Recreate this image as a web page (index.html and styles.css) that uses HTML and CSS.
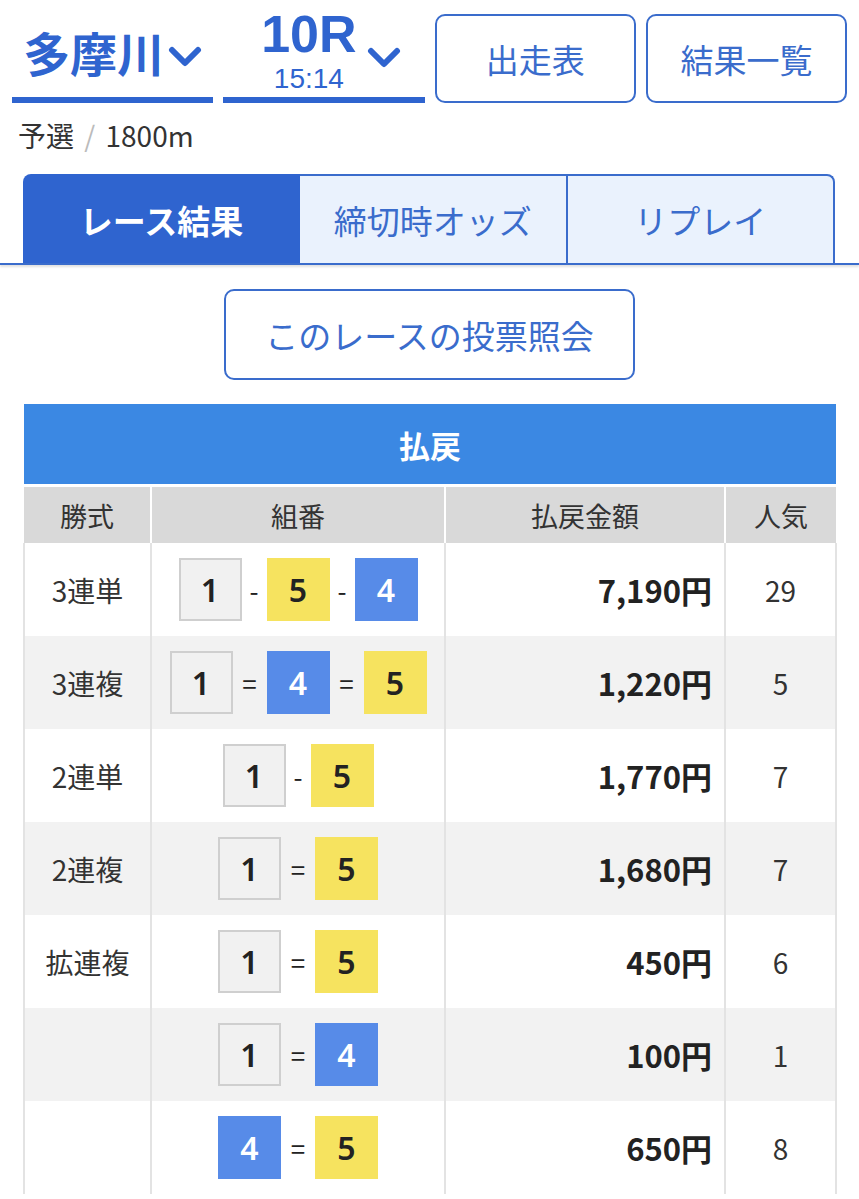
FILE: index.html
```html
<!DOCTYPE html>
<html lang="ja">
<head>
  <meta charset="UTF-8">
  <title>多摩川 10R レース結果</title>
  <link rel="stylesheet" href="styles.css">
</head>
<body>

  <!-- venue / race selectors + links -->
  <div class="top">
    <div class="select venue">
      <span class="venue-name">多摩川</span>
      <svg class="chev" viewBox="0 0 34 22"><path d="M4 4 L17 17 L30 4" /></svg>
    </div>
    <div class="select race">
      <div class="race-text">
        <span class="race-no">10R</span>
        <span class="race-time">15:14</span>
      </div>
      <svg class="chev" viewBox="0 0 34 22"><path d="M4 4 L17 17 L30 4" /></svg>
    </div>
    <a class="btn">出走表</a>
    <a class="btn">結果一覧</a>
  </div>

  <div class="race-info">予選 <span class="slash">/</span> 1800m</div>

  <!-- tabs -->
  <div class="tabs">
    <div class="tab active">レース結果</div>
    <div class="tab">締切時オッズ</div>
    <div class="tab">リプレイ</div>
  </div>

  <div class="vote-wrap">
    <a class="btn vote">このレースの投票照会</a>
  </div>

  <!-- payout table -->
  <table class="pay">
    <colgroup>
      <col class="c-type">
      <col class="c-combo">
      <col class="c-amount">
      <col class="c-pop">
    </colgroup>
    <thead>
      <tr><th class="title" colspan="4">払戻</th></tr>
      <tr class="cols">
        <th>勝式</th>
        <th>組番</th>
        <th>払戻金額</th>
        <th>人気</th>
      </tr>
    </thead>
    <tbody>
      <tr>
        <td class="type">3連単</td>
        <td class="combo"><span class="b b1">1</span><i>-</i><span class="b b5">5</span><i>-</i><span class="b b4">4</span></td>
        <td class="amount">7,190円</td>
        <td class="pop">29</td>
      </tr>
      <tr>
        <td class="type">3連複</td>
        <td class="combo"><span class="b b1">1</span><i class="eq">=</i><span class="b b4">4</span><i class="eq">=</i><span class="b b5">5</span></td>
        <td class="amount">1,220円</td>
        <td class="pop">5</td>
      </tr>
      <tr>
        <td class="type">2連単</td>
        <td class="combo"><span class="b b1">1</span><i>-</i><span class="b b5">5</span></td>
        <td class="amount">1,770円</td>
        <td class="pop">7</td>
      </tr>
      <tr>
        <td class="type">2連複</td>
        <td class="combo"><span class="b b1">1</span><i class="eq">=</i><span class="b b5">5</span></td>
        <td class="amount">1,680円</td>
        <td class="pop">7</td>
      </tr>
      <tr>
        <td class="type">拡連複</td>
        <td class="combo"><span class="b b1">1</span><i class="eq">=</i><span class="b b5">5</span></td>
        <td class="amount">450円</td>
        <td class="pop">6</td>
      </tr>
      <tr>
        <td class="type"></td>
        <td class="combo"><span class="b b1">1</span><i class="eq">=</i><span class="b b4">4</span></td>
        <td class="amount">100円</td>
        <td class="pop">1</td>
      </tr>
      <tr>
        <td class="type"></td>
        <td class="combo"><span class="b b4">4</span><i class="eq">=</i><span class="b b5">5</span></td>
        <td class="amount">650円</td>
        <td class="pop">8</td>
      </tr>
    </tbody>
  </table>

</body>
</html>
```

FILE: styles.css
```css
body { margin: 0; font-family: "Noto Sans CJK JP", "Noto Sans", sans-serif; color: #333; background: #fff; }

/* top bar */
.top { display: grid; grid-template-columns: repeat(4, 1fr); gap: 10px; padding: 14px 12px 0; }
.select { height: 83px; border-bottom: 6px solid #2f64cf; display: flex; align-items: center; justify-content: center; gap: 6px; color: #2f64cf; }
.venue-name { font-size: 47px; font-weight: bold; line-height: 1; margin-top: -8px; }
.venue .chev { margin-top: 2px; margin-left: -2px; }
.race-text { display: flex; flex-direction: column; align-items: center; margin-left: 14px; margin-top: -12px; }
.race-no { font-family: "Liberation Sans", sans-serif; font-size: 52px; font-weight: bold; line-height: 58px; }
.race-time { font-family: "Liberation Sans", sans-serif; font-size: 28px; line-height: 31px; }
.chev { width: 34px; height: 22px; fill: none; stroke: #2f64cf; stroke-width: 6; stroke-linecap: round; stroke-linejoin: round; }
.race .chev { margin-top: 4px; margin-left: 4px; }

.btn { display: flex; align-items: center; justify-content: center; height: 85px; border: 2px solid #3a6ccc; border-radius: 10px; color: #3a6ccc; font-size: 33px; text-decoration: none; }

.race-info { padding: 15px 18px 0; font-size: 28px; line-height: 34px; color: #333; }
.race-info .slash { color: #bbb; margin: 0 4px; }

/* tabs */
.tabs { display: flex; margin-top: 22px; padding: 0 24px 0 23px; border-bottom: 2px solid #3a6ccc; box-shadow: 0 2px 2px rgba(0,0,0,0.12); }
.tab { flex: 1; height: 87px; display: flex; align-items: center; justify-content: center; background: #eaf2fd; border: 2px solid #3a6ccc; border-bottom: none; border-left-width: 0; font-size: 33px; color: #3a6ccc; }
.tab:first-child { border-left-width: 2px; border-top-left-radius: 8px; flex: 0 0 273px; }
.tab:last-child { border-top-right-radius: 8px; }
.tab.active { background: #2f64cf; color: #fff; font-weight: bold; border-color: #2f64cf; }

.vote-wrap { display: flex; justify-content: center; padding-top: 24px; }
.btn.vote { width: 407px; height: 87px; }

/* payout table */
.pay { margin: 24px 24px 0 23px; width: 812px; border-collapse: collapse; table-layout: fixed; }
.c-type { width: 127px; }
.c-combo { width: 294px; }
.c-amount { width: 280px; }
.c-pop { width: 111px; }
.pay th, .pay td { padding: 0; text-align: center; }
.pay .title { height: 80px; background: #3b88e3; color: #fff; font-size: 31px; font-weight: bold; border-bottom: 3px solid #fff; }
.pay .cols th { height: 56px; background: #d9d9d9; font-weight: normal; font-size: 27px; color: #333; border-left: 2px solid #fff; }
.pay .cols th:first-child { border-left: none; }
.pay td { height: 93px; border-left: 2px solid #e3e3e3; border-right: 2px solid #e3e3e3; font-size: 28px; }
.pay tbody tr:nth-child(even) td { background: #f2f2f2; }
.pay .amount { text-align: right; padding-right: 12px; font-size: 31px; font-weight: bold; color: #222; }
.pay .pop { font-size: 28px; }

.combo { white-space: nowrap; }
.combo i { font-style: normal; display: inline-block; width: 25px; text-align: center; font-size: 26px; color: #222; vertical-align: middle; }
.combo i.eq { width: 34px; }
.b { display: inline-block; vertical-align: middle; width: 63px; height: 63px; line-height: 63px; font-family: "Noto Sans", sans-serif; font-size: 32px; font-weight: 600; box-sizing: border-box; }
.b1 { background: #f1f1f1; border: 2px solid #cfcfcf; line-height: 59px; color: #222; }
.b5 { background: #f6e35f; color: #222; }
.b4 { background: #578be8; color: #fff; }
```
